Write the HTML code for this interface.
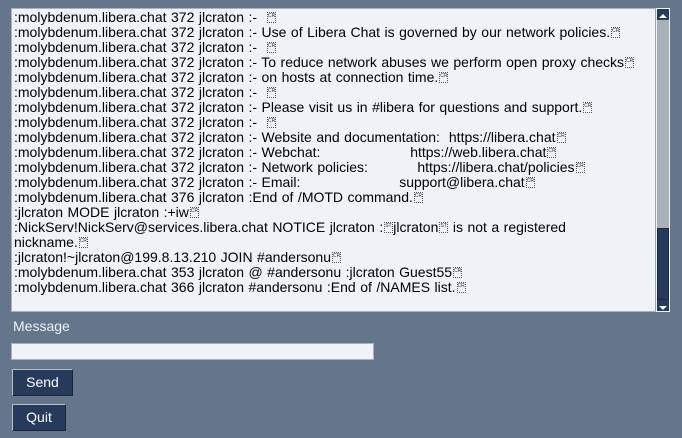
<!DOCTYPE html>
<html><head><style>
body{margin:0;width:682px;height:438px;background:#65768c;font-family:"Liberation Sans",sans-serif;overflow:hidden;position:relative}
.log{position:absolute;left:11px;top:8px;width:643px;height:302px;background:#eff2f7;border:1px solid #aab2bc;border-right:2px solid #a0a4a8;overflow:hidden}
.txt{position:absolute;left:2px;top:1px;font-size:14px;line-height:15px;color:#000;white-space:pre;word-spacing:0.6px}
.c{display:inline-block;overflow:hidden;border:1px dotted #555;font-size:5px;line-height:5px;height:11px;width:9px;vertical-align:-1px;text-align:center;box-sizing:border-box;margin-left:1px;color:#333;padding-top:1px}
.sb{position:absolute;left:656px;top:8px;width:14px;height:304px;background:#f0f2f5}
.tr{position:absolute;left:1px;top:12px;width:12px;height:280px;background:#a9b1b9}
.th{position:absolute;left:1px;top:220px;width:12px;height:72px;background:#263a5c;border:1px solid #1a2840;box-sizing:border-box}
.ar{position:absolute;left:1px;width:12px;height:11px;background:#263a5c}
.lbl{position:absolute;left:13px;top:318px;color:#eef1f5;font-size:14px}
.in{position:absolute;left:11px;top:343px;width:363px;height:17px;background:#eff2f7;border:1px solid #aab2bc;box-sizing:border-box}
.btn{position:absolute;left:12px;background:#263a5c;color:#fff;font-size:14px;border:1px solid #b8c0c8;border-right-color:#1a2436;border-bottom-color:#1a2436;text-align:center;line-height:24px;box-sizing:border-box;height:27px}
</style></head><body>
<div class="log"><div class="txt">:molybdenum.libera.chat 372 jlcraton :-  <span class="c">CR</span>
:molybdenum.libera.chat 372 jlcraton :- Use of Libera Chat is governed by our network policies.<span class="c">CR</span>
:molybdenum.libera.chat 372 jlcraton :-  <span class="c">CR</span>
:molybdenum.libera.chat 372 jlcraton :- To reduce network abuses we perform open proxy checks<span class="c">CR</span>
:molybdenum.libera.chat 372 jlcraton :- on hosts at connection time.<span class="c">CR</span>
:molybdenum.libera.chat 372 jlcraton :-  <span class="c">CR</span>
:molybdenum.libera.chat 372 jlcraton :- Please visit us in #libera for questions and support.<span class="c">CR</span>
:molybdenum.libera.chat 372 jlcraton :-  <span class="c">CR</span>
:molybdenum.libera.chat 372 jlcraton :- Website and documentation:  https://libera.chat<span class="c">CR</span>
:molybdenum.libera.chat 372 jlcraton :- Webchat:                    https://web.libera.chat<span class="c">CR</span>
:molybdenum.libera.chat 372 jlcraton :- Network policies:           https://libera.chat/policies<span class="c">CR</span>
:molybdenum.libera.chat 372 jlcraton :- Email:                      support@libera.chat<span class="c">CR</span>
:molybdenum.libera.chat 376 jlcraton :End of /MOTD command.<span class="c">CR</span>
:jlcraton MODE jlcraton :+iw<span class="c">CR</span>
:NickServ!NickServ@services.libera.chat NOTICE jlcraton :<span class="c">STX</span>jlcraton<span class="c">STX</span> is not a registered
nickname.<span class="c">CR</span>
:jlcraton!~jlcraton@199.8.13.210 JOIN #andersonu<span class="c">CR</span>
:molybdenum.libera.chat 353 jlcraton @ #andersonu :jlcraton Guest55<span class="c">CR</span>
:molybdenum.libera.chat 366 jlcraton #andersonu :End of /NAMES list.<span class="c">CR</span></div></div>
<div class="sb"><div class="ar" style="top:1px"><svg width="12" height="11"><path d="M2 7H10L6 3Z" fill="#fff"/></svg></div><div class="tr"></div><div class="th"></div><div class="ar" style="top:292px"><svg width="12" height="11"><path d="M2 4H10L6 8Z" fill="#fff"/></svg></div></div>
<div class="lbl">Message</div>
<div class="in"></div>
<div class="btn" style="top:369px;width:61px">Send</div>
<div class="btn" style="top:404px;width:54px">Quit</div>
</body></html>
